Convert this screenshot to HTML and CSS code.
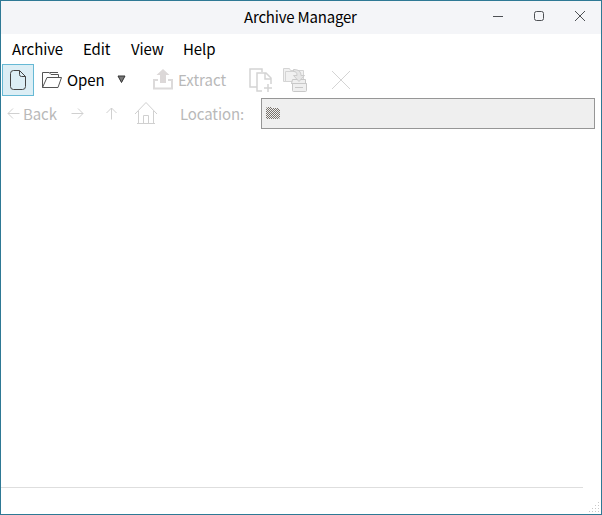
FILE: index.html
```html
<!DOCTYPE html>
<html lang="en">
<head>
<meta charset="utf-8">
<title>Archive Manager</title>
<link rel="stylesheet" href="styles.css">
</head>
<body>
<div class="window">
  <header class="titlebar">
    <h1 class="title">Archive Manager</h1>
    <div class="controls">
      <svg width="12" height="12" viewBox="0 0 12 12"><path d="M1 6.5h10"/></svg>
      <svg width="12" height="12" viewBox="0 0 12 12"><rect x="1.5" y="1.5" width="9" height="9" rx="2"/></svg>
      <svg width="12" height="12" viewBox="0 0 12 12"><path d="M1 1l10 10M11 1L1 11"/></svg>
    </div>
  </header>
  <nav class="menu">
    <span class="m-archive">Archive</span><span class="m-edit">Edit</span><span class="m-view">View</span><span class="m-help">Help</span>
  </nav>
  <div class="toolbar">
    <button class="new"><svg width="18" height="22" viewBox="0 0 18 22"><path d="M4.5 1.5h6l6 6v10q0 3-3 3h-9q-3 0-3-3v-13q0-3 3-3zM10.5 1.5v4q0 2 2 2h4"/></svg></button>
    <svg class="open-icon" width="22" height="18" viewBox="0 0 22 18"><path d="M1.500 16.500V1.500h6.500l2 2h7.500v3M1.500 16.500L6 6.500h14.500L17 16.500zM8.500 1.500h8.500"/></svg>
    <span class="open">Open</span>
    <svg class="caret" width="9" height="9" viewBox="0 0 9 9"><path d="M1 1h7L4.500 7.500z"/></svg>
    <svg class="extract-icon" width="22" height="22" viewBox="0 0 22 22"><path class="frame" d="M6 11H2v8.500h18V11h-4"/><path class="arrow" d="M11 0l6.500 6H14v8H8V6H4.500z"/></svg>
    <span class="extract">Extract</span>
    <svg class="add-icon" width="26" height="26" viewBox="0 0 26 26"><path d="M9 20H2V2h12v3M14 24H9V6h9l5 5v6M17 6v6h6M20 17v8M16 21h8"/></svg>
    <svg class="pack-icon" width="26" height="26" viewBox="0 0 26 26">
      <path class="folder" d="M1.500 14.500V1.500h6l1 2h13v11z"/>
      <path class="folder" d="M3.500 14.500v-10h14v10z"/>
      <path class="box" d="M10.500 12.500h13v4h1v7q0 1-1 1h-12q-1 0-1-1v-7h-1zM9.500 16.500h15"/>
      <path class="box" d="M13 20.500h8"/>
      <path class="down" d="M11.500 2.500c5 0 7.500 2 7.500 6h3.500L17 14.500l-5.500-6H15c0-3-1-4-3.500-4z"/>
    </svg>
    <svg class="delete-icon" width="20" height="20" viewBox="0 0 20 20"><path d="M1 1l18 18M19 1L1 19"/></svg>
  </div>
  <div class="navbar">
    <svg class="back-icon" width="13" height="12" viewBox="0 0 13 12"><path d="M12.500 6.500H1M6 1.500L1 6.500l5 5"/></svg>
    <span class="back">Back</span>
    <svg class="forward-icon" width="13" height="12" viewBox="0 0 13 12"><path d="M.5 6.500H12M7 1.500l5 5-5 5"/></svg>
    <svg class="up-icon" width="12" height="13" viewBox="0 0 12 13"><path d="M6.500 12.500V1M1.500 6l5-5 5 5"/></svg>
    <svg class="home-icon" width="24" height="24" viewBox="0 0 24 24"><path d="M1 13L12 1.500 23 13M4.500 10v12.500h15V10M9.500 22v-7.500h5V22M3 22.500h18"/></svg>
    <span class="location">Location:</span>
    <div class="field">
      <svg width="15" height="13" viewBox="0 0 15 13">
        <defs><pattern id="dither" width="2" height="2" patternUnits="userSpaceOnUse"><path d="M0 0h1v1H0zM1 1h1v1H1z"/></pattern></defs>
        <path fill="url(#dither)" d="M1 0h4l1 1h7v2h1v8l-1 1H1l-1-1V1z"/>
      </svg>
    </div>
  </div>
  <main class="content"></main>
  <footer class="status">
    <svg width="12" height="12" viewBox="0 0 12 12"><path d="M9 0h1v1H9zM6 3h1v1H6zM9 3h1v1H9zM3 6h1v1H3zM6 6h1v1H6zM9 6h1v1H9zM0 9h1v1H0zM3 9h1v1H3zM6 9h1v1H6zM9 9h1v1H9z"/></svg>
  </footer>
</div>
</body>
</html>
```

FILE: styles.css
```css
* { box-sizing: border-box; }
body {
  margin: 0;
  font: 15px/24px "Noto Sans CJK SC", "Noto Sans", sans-serif;
  letter-spacing: -0.1px;
  color: #000;
}
.window {
  width: 602px;
  height: 515px;
  border: 1px solid #2e7995;
  background: #fff;
  display: flex;
  flex-direction: column;
  overflow: hidden;
  white-space: nowrap;
}
svg { display: block; flex: none; fill: none; stroke-width: 1; }
.titlebar {
  height: 33px;
  flex: none;
  background: #f4f5f8;
  display: flex;
  justify-content: space-between;
  padding: 0 15px 0 243px;
}
.title { margin: 4px 0 0; font-size: 15px; font-weight: 400; letter-spacing: -0.2px; }
.controls { display: flex; gap: 29px; padding-top: 9px; stroke: #4d5054; }
.menu { height: 29px; flex: none; display: flex; padding: 3px 0 0 11px; }
.m-archive { width: 71px; }
.m-edit { width: 48px; }
.m-view { width: 52px; }
.toolbar { height: 33px; flex: none; display: flex; align-items: center; padding-left: 1px; }
.toolbar > svg { stroke: #d4d4d4; }
.toolbar > span { padding-top: 1px; }
.new {
  width: 32px;
  height: 32px;
  padding: 0;
  display: grid;
  place-items: center;
  border: 1px solid #66b9d5;
  background: #dceef5;
  stroke: #444;
}
.toolbar .open-icon { margin-left: 7px; stroke: #555; }
.open { width: 46px; margin-left: 4px; }
.toolbar .caret { margin-left: 4px; fill: #777; stroke: #333; }
.toolbar .extract-icon { margin-left: 26px; }
.extract-icon .frame { stroke: #dcdada; stroke-width: 2; }
.extract-icon .arrow { fill: #dcd8d8; stroke: none; }
.extract { width: 66px; margin-left: 4px; color: #b9b9b9; letter-spacing: 0; }
.toolbar .add-icon { margin-left: 4px; stroke-width: 1.5; }
.pack-icon { margin-left: 8px; }
.folder { fill: #f1f1f1; }
.down { fill: #e6e6e6; stroke: #ccc; }
.box { fill: #efefef; stroke: #c8c8c8; }
.delete-icon { margin-left: 23px; }
.navbar { height: 34px; flex: none; display: flex; align-items: center; color: #b9b9b9; padding-left: 6px; }
.navbar > svg { stroke: #d0d0d0; }
.navbar > span { padding-top: 2px; }
.back { width: 33px; margin-left: 3px; }
.forward-icon { margin-left: 15px; }
.up-icon { margin-left: 21px; }
.home-icon { margin-left: 17px; }
.location { width: 64px; margin-left: 22px; }
.field {
  width: 334px;
  height: 31px;
  margin-left: 17px;
  padding: 8px 0 0 4px;
  border: 1px solid #969696;
  background: #efefef;
}
#dither path { fill: #77716a; }
.content { width: 582px; flex: 1; border-bottom: 1px solid #dedede; }
.status { height: 26px; flex: none; display: flex; justify-content: flex-end; align-items: flex-end; }
.status svg { fill: #c8c8c8; }
```
